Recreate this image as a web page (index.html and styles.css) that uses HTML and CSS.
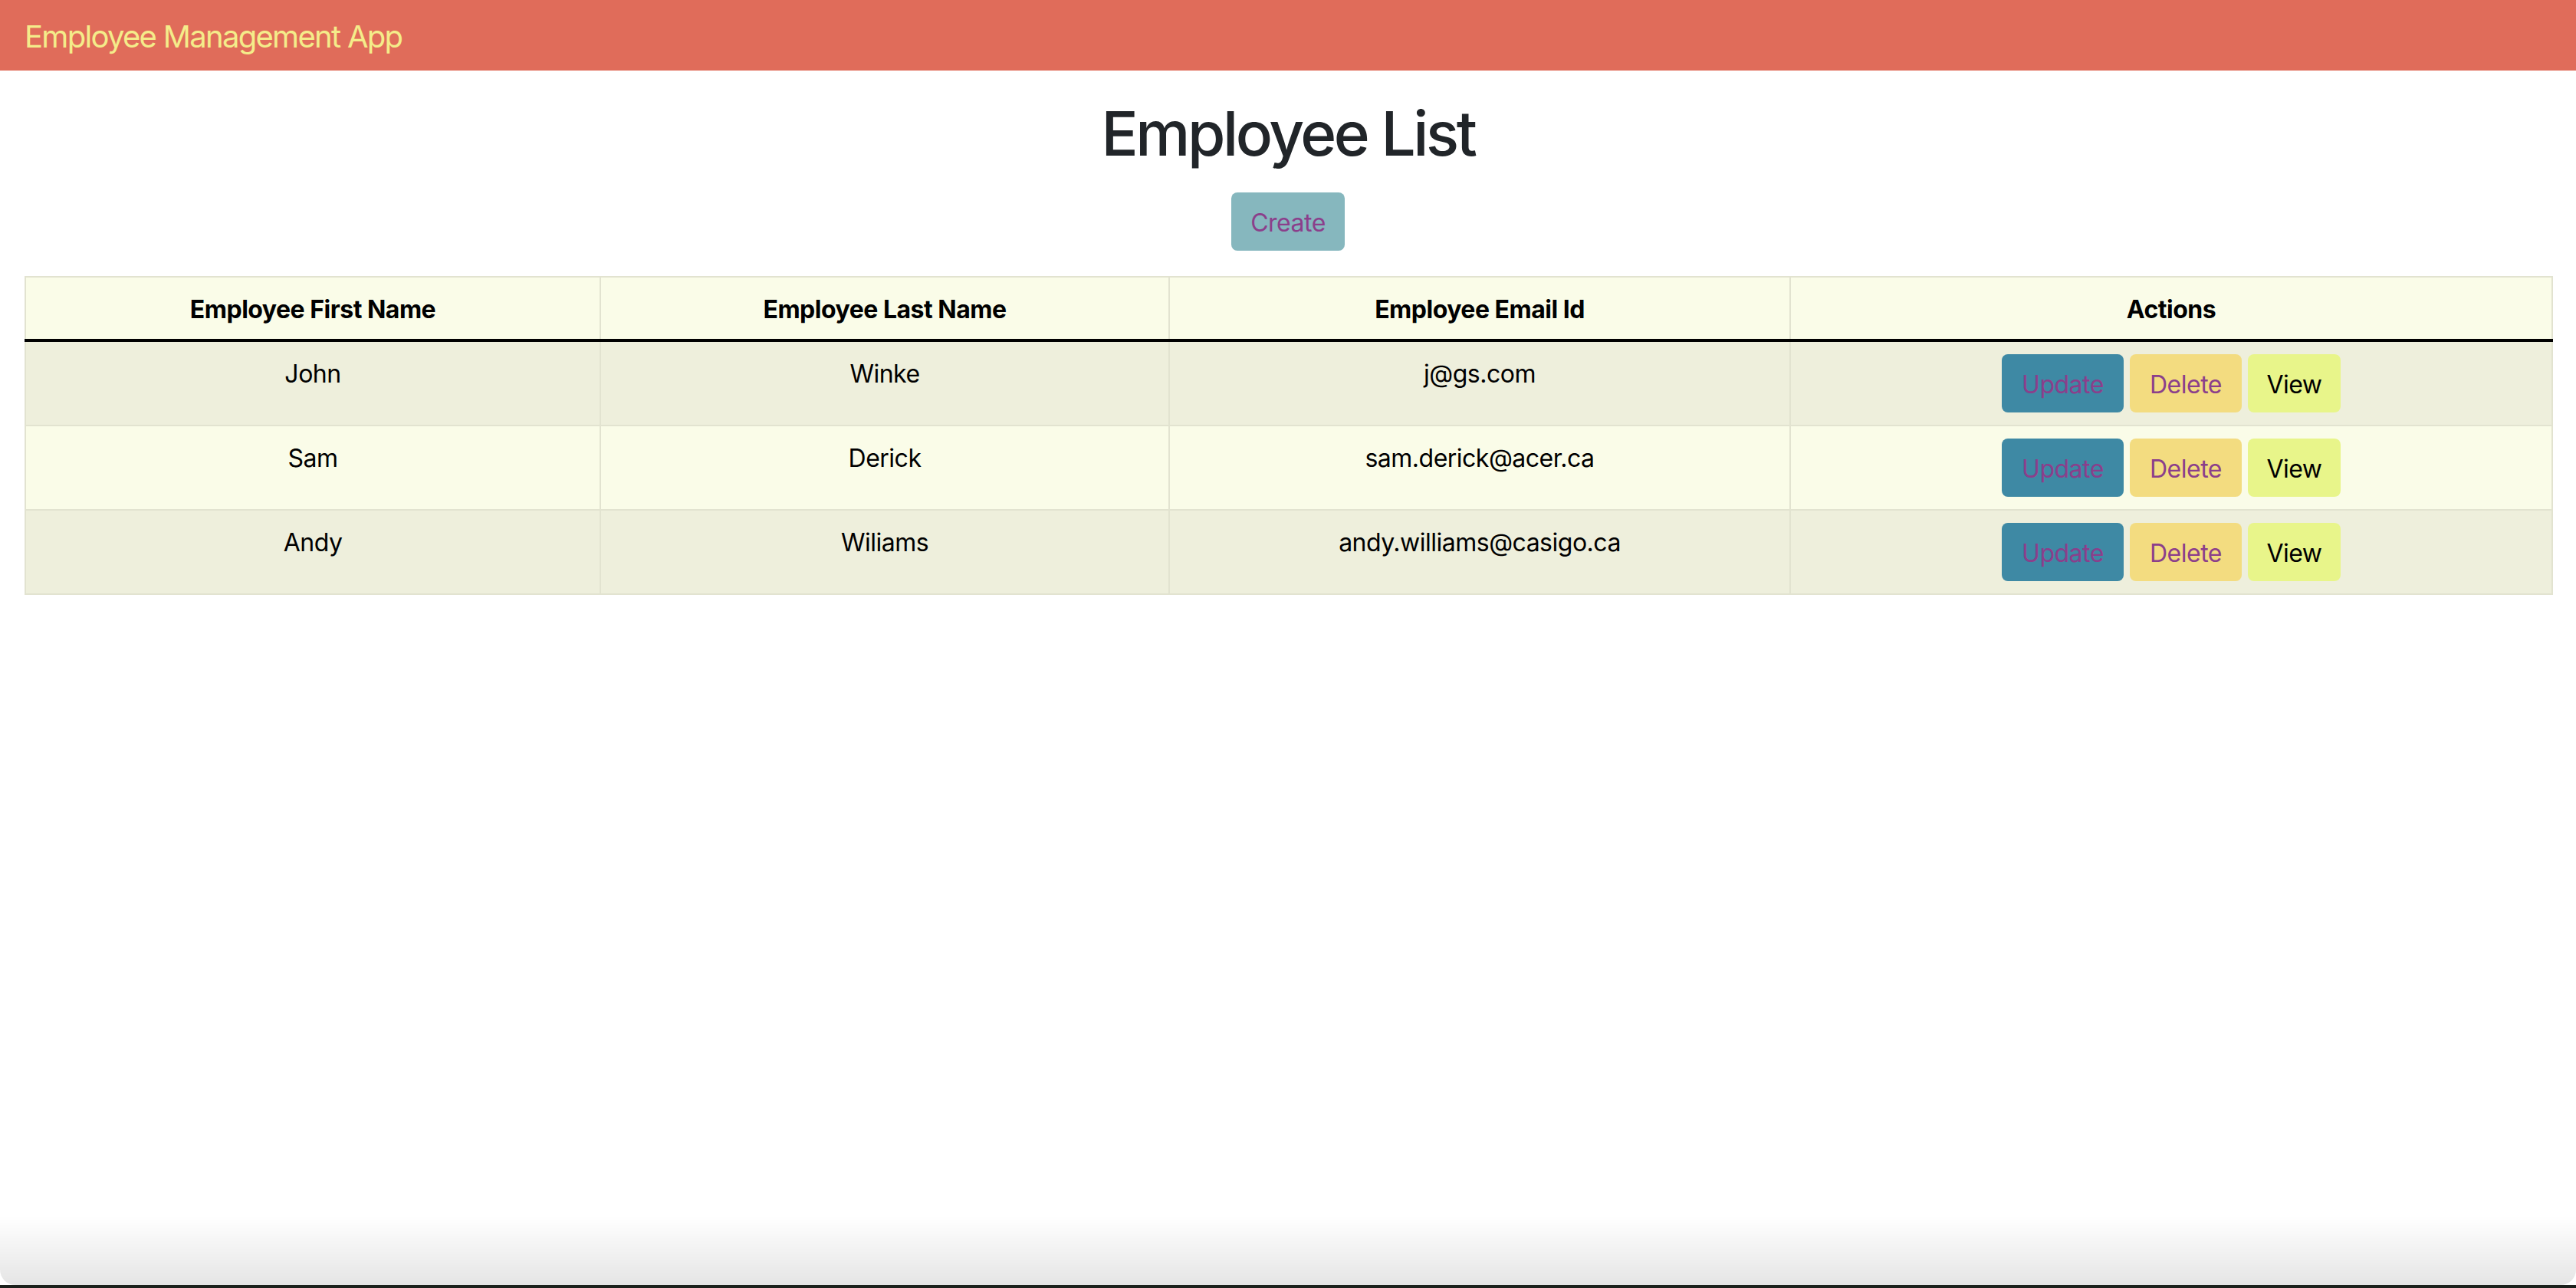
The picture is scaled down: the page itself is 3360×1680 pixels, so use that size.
FILE: index.html
```html
<!DOCTYPE html>
<html lang="en">
<head>
<meta charset="utf-8">
<title>Employee Management App</title>
<link rel="stylesheet" href="styles.css">
</head>
<body>
<header class="navbar">
  <span class="brand">Employee Management App</span>
</header>
<main class="container">
  <h1 class="title">Employee List</h1>
  <div class="create-row">
    <button class="btn btn-create">Create</button>
  </div>
  <table class="emp-table">
    <colgroup>
      <col class="c1">
      <col class="c2">
      <col class="c3">
      <col class="c4">
    </colgroup>
    <thead>
      <tr>
        <th>Employee First Name</th>
        <th>Employee Last Name</th>
        <th>Employee Email Id</th>
        <th>Actions</th>
      </tr>
    </thead>
    <tbody>
      <tr class="odd">
        <td>John</td>
        <td>Winke</td>
        <td>j@gs.com</td>
        <td class="actions"><div class="btns"><button class="btn btn-update">Update</button><button class="btn btn-delete">Delete</button><button class="btn btn-view">View</button></div></td>
      </tr>
      <tr class="even">
        <td>Sam</td>
        <td>Derick</td>
        <td>sam.derick@acer.ca</td>
        <td class="actions"><div class="btns"><button class="btn btn-update">Update</button><button class="btn btn-delete">Delete</button><button class="btn btn-view">View</button></div></td>
      </tr>
      <tr class="odd">
        <td>Andy</td>
        <td>Wiliams</td>
        <td>andy.williams@casigo.ca</td>
        <td class="actions"><div class="btns"><button class="btn btn-update">Update</button><button class="btn btn-delete">Delete</button><button class="btn btn-view">View</button></div></td>
      </tr>
    </tbody>
  </table>
</main>
<div class="window-shade"></div>
<div class="window-edge"></div>
</body>
</html>
```

FILE: styles.css
```css
html, body {
  margin: 0;
  padding: 0;
  background: #ffffff;
}

body {
  font-family: Inter, "Liberation Sans", Arial, sans-serif;
  font-size: 32px;
  line-height: 48px;
  color: #212529;
  min-height: 1680px;
}

.navbar {
  height: 92px;
  box-sizing: border-box;
  background: #e06c5a;
  display: flex;
  align-items: center;
  padding: 3px 32px 0;
}

.brand {
  font-size: 40px;
  line-height: 60px;
  color: #f4ec8a;
  letter-spacing: -1.7px;
}

.container {
  padding: 0 32px;
}

.title {
  margin: 34px 0 0;
  text-align: center;
  font-size: 80px;
  line-height: 96px;
  font-weight: 500;
  letter-spacing: -3.4px;
  color: #212529;
}

.create-row {
  display: flex;
  justify-content: center;
  margin-top: 29px;
  margin-bottom: 33px;
}

.btn {
  font-family: Inter, "Liberation Sans", Arial, sans-serif;
  font-size: 32px;
  line-height: 48px;
  height: 76px;
  padding: 3px 0 0;
  border: 0;
  border-radius: 8px;
  letter-spacing: -0.5px;
}

.btn-create {
  width: 148px;
  background: #86b7be;
  color: #8b3f8b;
}

.emp-table {
  width: 100%;
  table-layout: fixed;
  border-collapse: collapse;
  color: #000000;
}

.c1 { width: 750px; }
.c2 { width: 742px; }
.c3 { width: 810px; }
.c4 { width: 994px; }

.emp-table th,
.emp-table td {
  border: 2px solid #e2e3d0;
  padding: 18px 16px 14px;
  text-align: center;
  vertical-align: top;
  font-size: 32px;
  line-height: 48px;
  letter-spacing: -0.5px;
}

.emp-table td.actions {
  padding: 16px;
}

.emp-table th {
  background: #fafce8;
  font-weight: 700;
  border-bottom: 4px solid #000000;
}

.emp-table tr.odd td {
  background: #eeefdc;
}

.emp-table tr.even td {
  background: #fafce8;
}

.btns {
  display: flex;
  justify-content: center;
  gap: 8px;
}

.btn-update {
  width: 159px;
  background: #3e89a4;
  color: #8b3f8b;
}

.btn-delete {
  width: 146px;
  background: #f3dc80;
  color: #8b3f8b;
}

.btn-view {
  width: 121px;
  background: #e8f58a;
  color: #000000;
}

.window-shade {
  position: fixed;
  left: 0;
  right: 0;
  bottom: 4px;
  height: 90px;
  background: linear-gradient(to bottom, rgba(0, 0, 0, 0), rgba(0, 0, 0, 0.1));
  border-radius: 0 0 20px 20px;
  pointer-events: none;
}

.window-edge {
  position: fixed;
  left: 0;
  right: 0;
  bottom: 0;
  height: 4px;
  background: #1c211c;
  pointer-events: none;
}
```
